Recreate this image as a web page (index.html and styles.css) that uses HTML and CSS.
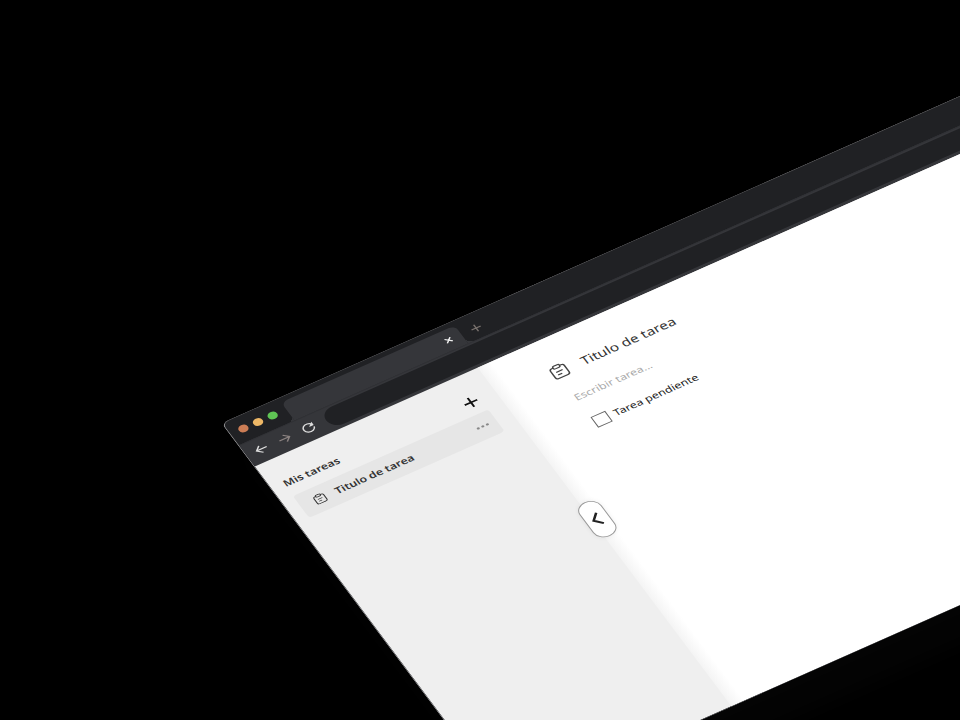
FILE: index.html
```html
<!DOCTYPE html>
<html lang="es">
<head>
<meta charset="utf-8">
<title>Mis tareas</title>
<link rel="stylesheet" href="styles.css">
</head>
<body>
<svg class="symbols">
  <symbol id="clipboard" viewBox="0 0 20 20">
    <path d="M6.5 3.5H5A2.5 2.5 0 0 0 2.5 6v10A2.5 2.5 0 0 0 5 18.5h10a2.500 2.500 0 0 0 2.500-2.500V6A2.500 2.500 0 0 0 15 3.500h-1.500"/>
    <rect x="6.500" y="1.500" width="7" height="4" rx="1.500"/>
    <path d="M6.500 10h7M6.500 14h4.500"/>
  </symbol>
</svg>
<div class="scene">
  <div class="browser">
    <div class="tabs">
      <div class="lights"><span class="light close"></span><span class="light shrink"></span><span class="light grow"></span></div>
      <div class="tab">
        <button class="icon-button" aria-label="Cerrar"><svg class="small" viewBox="0 0 8 8"><path d="M1 1l6 6M7 1L1 7"/></svg></button>
      </div>
      <button class="icon-button new-tab" aria-label="Nueva"><svg class="plus" viewBox="0 0 12 12"><path d="M6 1v10M1 6h10"/></svg></button>
    </div>
    <div class="toolbar">
      <button class="icon-button" aria-label="Atrás"><svg class="nav" viewBox="0 0 14 14"><path d="M13 7H2M7 2L2 7l5 5"/></svg></button>
      <button class="icon-button dim" aria-label="Adelante"><svg class="nav" viewBox="0 0 14 14"><path d="M1 7h11M7 2l5 5-5 5"/></svg></button>
      <button class="icon-button" aria-label="Recargar"><svg class="nav" viewBox="0 0 14 14"><path d="M12 4.500A5.500 5.500 0 1 0 12.500 8"/><path class="solid" d="M13 1v5H8z"/></svg></button>
      <input class="address" type="text" aria-label="Dirección">
    </div>
    <div class="app">
      <nav class="sidebar">
        <header class="sidebar-head">
          <h2>Mis tareas</h2>
          <button class="icon-button add" aria-label="Agregar"><svg class="nav" viewBox="0 0 14 14"><path d="M7 0v14M0 7h14"/></svg></button>
        </header>
        <div class="item">
          <svg class="item-icon"><use href="#clipboard"/></svg>
          <a href="#">Titulo de tarea</a>
          <button class="icon-button more" aria-label="Opciones"><svg class="nav" viewBox="0 0 14 14"><circle cx="2" cy="7" r="1.500"/><circle cx="7" cy="7" r="1.500"/><circle cx="12" cy="7" r="1.500"/></svg></button>
        </div>
      </nav>
      <main class="content">
        <button class="toggle" aria-label="Ocultar"><svg viewBox="0 0 10 20"><path d="M9 2L2 10l7 8"/></svg></button>
        <div class="title">
          <svg class="title-icon"><use href="#clipboard"/></svg>
          <h1>Titulo de tarea</h1>
        </div>
        <input class="entry" type="text" placeholder="Escribir tarea..." aria-label="Escribir tarea">
        <label class="task"><input type="checkbox">Tarea pendiente</label>
      </main>
    </div>
  </div>
</div>
</body>
</html>
```
FILE: styles.css
```css
* { box-sizing: border-box; }

body {
  margin: 0;
  background: #000;
  color: #333;
  font-family: "Noto Sans", "Open Sans", sans-serif;
  font-size: 12px;
  line-height: 20px;
}

h1, h2 { margin: 0; }

button, input { font: inherit; }

svg {
  display: block;
  fill: none;
  stroke: currentColor;
  stroke-width: 1.5;
}

.symbols { display: none; }

.scene {
  height: 100vh;
  padding: 423px 0 0 221px;
  overflow: hidden;
}

.browser {
  display: flex;
  flex-direction: column;
  width: 100vw;
  height: 82.5vh;
  border: 1px solid #58585a;
  border-left-color: #88888a;
  border-radius: 8px;
  overflow: hidden;
  background: #202124;
  box-shadow: 0 45px 25px #040404;
  transform-origin: 0 0;
  transform: matrix(0.914, -0.405, 0.483, 0.645, 0, 0);
}

.icon-button {
  display: flex;
  padding: 0;
  border: 0;
  background: none;
  color: inherit;
}

.tabs {
  display: flex;
  align-items: center;
  height: 34px;
  padding-left: 9px;
  color: #eee;
}

.lights { display: flex; gap: 6px; }
.light { width: 10px; height: 10px; border-radius: 50%; }
.close { background: #cc7d55; }
.shrink { background: #edb766; }
.grow { background: #5fc454; }

.tab {
  position: relative;
  display: flex;
  align-items: center;
  justify-content: flex-end;
  align-self: flex-end;
  width: 190px;
  height: 28px;
  margin-left: 10px;
  padding-right: 10px;
  border-radius: 7px 7px 0 0;
  background: #35363a;
}

.tab::before, .tab::after {
  content: "";
  position: absolute;
  bottom: 0;
  width: 7px;
  height: 7px;
}

.tab::before { right: 100%; background: radial-gradient(circle at 0 0, transparent 7px, #35363a 7px); }
.tab::after { left: 100%; background: radial-gradient(circle at 100% 0, transparent 7px, #35363a 7px); }

.small { width: 8px; height: 8px; }
.plus { width: 12px; height: 12px; }
.new-tab { padding-top: 6px; margin-left: 10px; color: #77706c; }
.nav { width: 14px; height: 14px; }

.toolbar {
  display: flex;
  align-items: center;
  gap: 12px;
  height: 33px;
  padding: 0 0 2px 9px;
  border-top: 1px solid #303135;
  background: #35363a;
  color: #ddd;
}

.dim { color: #8b8280; }
.solid { fill: currentColor; stroke: none; }

.address {
  flex: 1;
  height: 26px;
  border: 0;
  border-radius: 13px;
  background: #202124;
  color: #ddd;
}

.app { display: flex; flex: 1; background: #efefef; }

.sidebar {
  width: 244px;
  padding: 26px 17px 0 13px;
}

.sidebar-head {
  display: flex;
  align-items: center;
  justify-content: space-between;
  padding: 0 3px 0 0;
  margin-bottom: 8px;
  color: #111;
}

.sidebar-head h2 {
  color: #333;
  font-size: 12px;
  font-weight: 600;
}

.add { padding-top: 2px; }
.add svg { stroke-width: 2; }

.item {
  display: flex;
  align-items: center;
  height: 34px;
  padding: 0 8px 0 14px;
  border-radius: 4px;
  background: #e6e6e6;
}

.item-icon { width: 14px; height: 14px; }

.item a {
  flex: 1;
  margin-left: 10px;
  color: #333;
  font-weight: 600;
  text-decoration: none;
}

.more { color: #888; }
.more svg { fill: currentColor; stroke: none; }

.content {
  position: relative;
  flex: 1;
  padding: 34px 0 0 55px;
  background: linear-gradient(90deg, #f4f4f4, #fff 14px);
}

.toggle {
  position: absolute;
  top: 212px;
  left: -7px;
  display: flex;
  align-items: center;
  justify-content: center;
  width: 24px;
  height: 52px;
  padding: 0;
  border: 1px solid #999;
  border-radius: 12px;
  background: #fff;
  box-shadow: 0 0 6px #0001;
  color: #222;
}

.toggle svg { width: 10px; height: 20px; margin-right: 2px; stroke-width: 2.5; }

.title { display: flex; align-items: center; gap: 14px; }
.title-icon { width: 20px; height: 20px; color: #444; }
.title h1 { font-size: 15px; font-weight: 400; line-height: 24px; }

.entry {
  display: block;
  width: 50%;
  height: 20px;
  margin-top: 18px;
  padding: 0 6px;
  border: 0;
  background: none;
}

.entry::placeholder { color: #aaa; opacity: 1; }

.task {
  display: flex;
  align-items: center;
  gap: 6px;
  margin: 18px 0 0 7px;
  color: #222;
}

.task input {
  appearance: none;
  width: 16px;
  height: 16px;
  margin: 0;
  border: 1px solid #666;
  background: #fff;
}
```
